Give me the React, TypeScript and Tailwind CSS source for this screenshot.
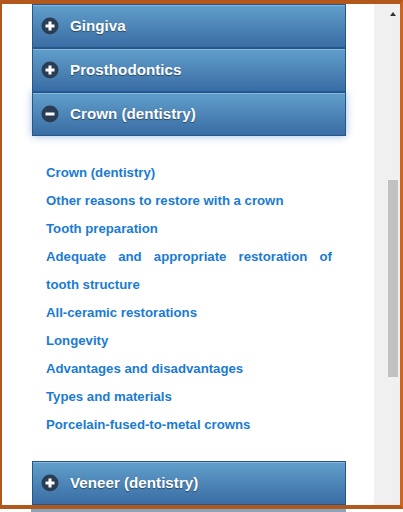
import React from 'react';

const links = [
  'Crown (dentistry)',
  'Other reasons to restore with a crown',
  'Tooth preparation',
  'Adequate and appropriate restoration of tooth structure',
  'All-ceramic restorations',
  'Longevity',
  'Advantages and disadvantages',
  'Types and materials',
  'Porcelain-fused-to-metal crowns',
];

const ToggleIcon: React.FC<{ open?: boolean }> = ({ open }) => (
  <svg width="18" height="18" viewBox="0 0 18 18" className="shrink-0">
    <circle cx="9" cy="9.5" r="8.5" fill="#5a86b3" />
    <circle cx="9" cy="9" r="8.5" fill="#293d55" />
    <path d="M4.5 9h9" stroke="#fff" strokeWidth="3" />
    {!open && <path d="M9 4.5v9" stroke="#fff" strokeWidth="3" />}
  </svg>
);

const Header: React.FC<{ title: string; open?: boolean }> = ({ title, open }) => (
  <div
    className={
      'flex h-[44px] items-center border border-[#24568a] bg-linear-to-b from-[#619fcb] to-[#3a6da4] pl-[8px] ' +
      (open
        ? 'relative z-10 shadow-[0_0_8px_rgba(40,110,190,0.45),inset_0_1px_0_rgba(255,255,255,0.25)]'
        : 'shadow-[inset_0_1px_0_rgba(255,255,255,0.25)]')
    }
  >
    <ToggleIcon open={open} />
    <span className="ml-[11px] text-[15.2px] font-bold text-white [text-shadow:0_1px_1px_rgba(0,0,0,0.45)]">
      {title}
    </span>
  </div>
);

export default function App() {
  return (
    <div className="h-[512px] w-[403px] overflow-hidden bg-white font-['Liberation_Sans',Arial,sans-serif]">
      <div className="flex h-[509px] border-t-4 border-b-4 border-l-2 border-r-[3px] border-[#b3581c] border-r-[#cc641d]">
        {/* content */}
        <div className="w-[372px] overflow-hidden bg-white">
          <div className="ml-[30px] w-[314px]">
            <Header title="Gingiva" />
            <Header title="Prosthodontics" />
            <Header title="Crown (dentistry)" open />
            <div className="px-[14px] pt-[23px] pb-[22px]">
              {links.map((l) => (
                <a
                  key={l}
                  href="#"
                  className="block text-justify text-[13.2px] leading-[28px] font-bold text-[#1b7bd2]"
                >
                  {l}
                </a>
              ))}
            </div>
            <Header title="Veneer (dentistry)" />
          </div>
        </div>
        {/* scrollbar */}
        <div className="relative w-[26px] bg-[#f0f0f0]">
          <div className="absolute top-[8px] left-[16px] h-0 w-0 border-r-[3px] border-b-[4px] border-l-[3px] border-r-transparent border-b-[#333] border-l-transparent" />
          <div className="absolute top-[176px] left-[14px] h-[197px] w-[10px] bg-[#c1c1c1]" />
        </div>
      </div>
      <div className="flex h-[3px]">
        <div className="ml-[31px] w-[315px] bg-[#8aa4bd]" />
      </div>
    </div>
  );
}
